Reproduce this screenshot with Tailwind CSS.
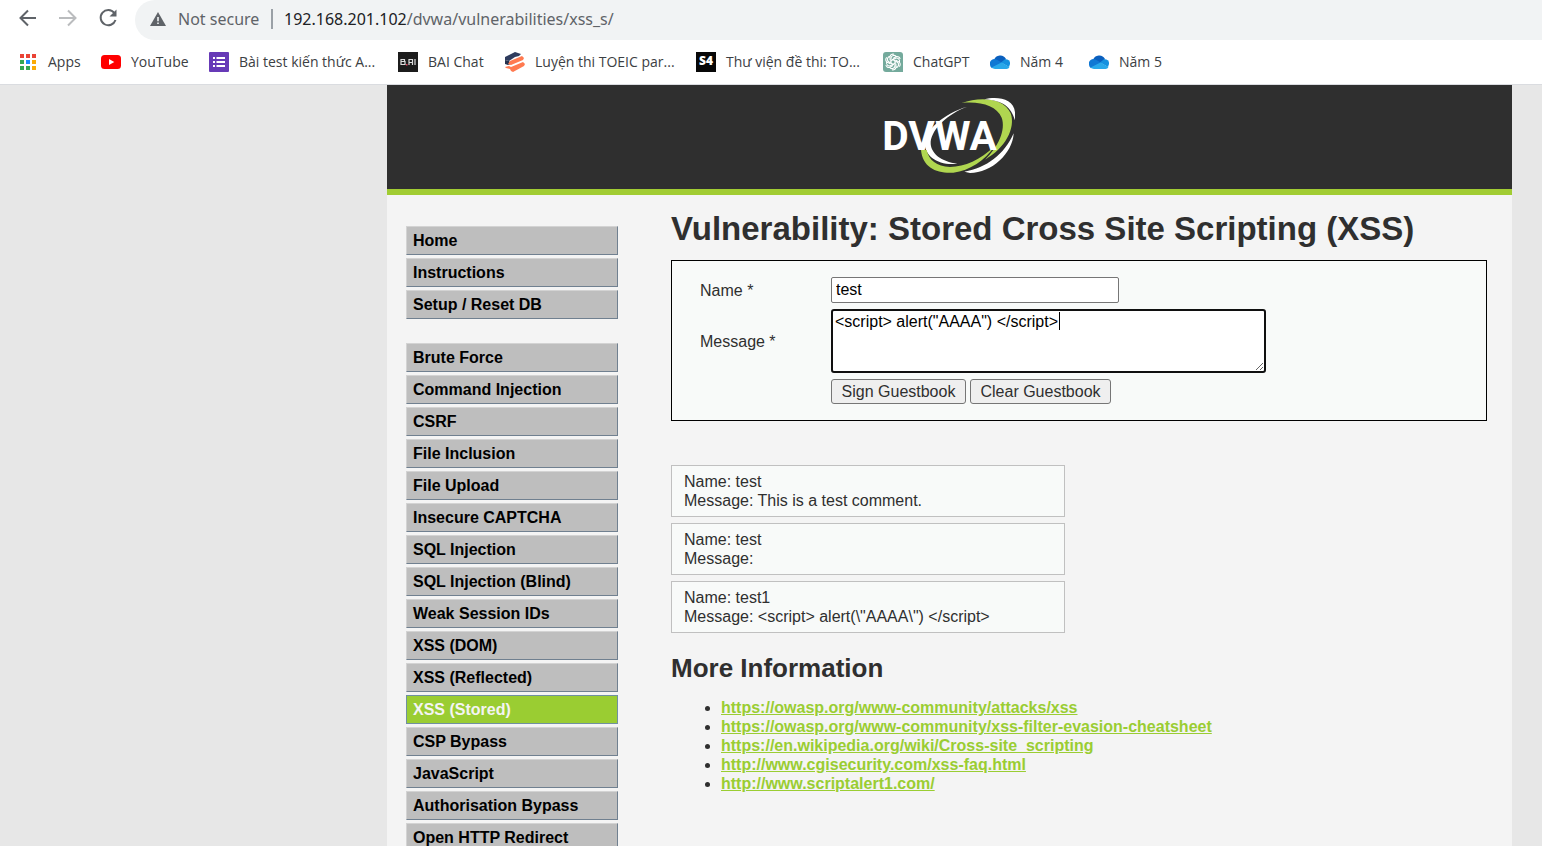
<!DOCTYPE html>
<html lang="en">
<head>
<meta charset="utf-8">
<title>Vulnerability: Stored Cross Site Scripting (XSS)</title>
<script src="https://cdn.jsdelivr.net/npm/@tailwindcss/browser@4"></script>
</head>
<body class="flex h-screen flex-col overflow-hidden bg-[#e7e7e7] font-['Liberation_Sans',Arial,sans-serif] text-base text-[#2f2f2f]">

<!-- Browser toolbar -->
<div class="shrink-0 border-b border-[#dadce0] bg-white font-['Open_Sans','Noto_Sans',sans-serif] text-[#3c4043]">
  <div class="flex h-10 items-start overflow-hidden">
    <div class="flex h-9 w-[135px] shrink-0 items-center gap-4 pl-4">
      <button type="button" aria-label="Back" class="size-6"><svg viewBox="0 0 24 24" class="size-6" fill="none" stroke="#5f6368" stroke-width="2"><path d="M20 12H5M12 4.500L4.500 12l7.500 7.500"/></svg></button>
      <button type="button" aria-label="Forward" class="size-6"><svg viewBox="0 0 24 24" class="size-6" fill="none" stroke="#babcbe" stroke-width="2"><path d="M3 12h15.500M12 4.500l7.500 7.500-7.500 7.500"/></svg></button>
      <button type="button" aria-label="Reload" class="size-6"><svg viewBox="0 0 24 24" class="size-6"><path d="M18.300 7A7.600 7.600 0 1 0 19.500 14" fill="none" stroke="#5f6368" stroke-width="2"/><path d="M20.500 3.500v7h-7z" fill="#5f6368"/></svg></button>
    </div>
    <div class="flex h-10 flex-1 items-center rounded-l-full bg-[#f1f3f4] pb-[2px] pl-[15px] font-['Noto_Sans',sans-serif] text-base">
      <svg viewBox="0 0 16 14" class="mr-3 h-[14px] w-4 shrink-0"><path d="M8 0l8 14H0z" fill="#5f6368"/><path d="M7.200 5h1.600v4.200H7.200zM7.200 10.400h1.600V12H7.200z" fill="#f1f3f4"/></svg>
      <span class="w-[93px] text-[#5f6368]">Not secure</span>
      <span class="mr-[11px] h-5 w-[2px] bg-[#9aa0a6]"></span>
      <span class="text-[#5f6368]"><span class="text-[#202124]">192.168.201.102</span>/dvwa/vulnerabilities/xss_s/</span>
    </div>
  </div>
  <nav aria-label="Bookmarks" class="flex h-11 items-center pl-[18px] text-sm whitespace-nowrap">
    <a href="#" class="flex w-[83px] shrink-0 items-center gap-[10px]"><svg viewBox="0 0 20 20" class="size-5"><path fill="#ea4335" d="M2 2h4v4H2zM8 2h4v4H8zM14 2h4v4h-4z"/><path fill="#34a853" d="M2 8h4v4H2zM2 14h4v4H2zM8 14h4v4H8z"/><path fill="#1a8cff" d="M8 8h4v4H8z"/><path fill="#fbab05" d="M14 8h4v4h-4zM14 14h4v4h-4z"/></svg>Apps</a>
    <a href="#" class="flex w-[108px] shrink-0 items-center gap-[10px]"><svg viewBox="0 0 20 20" class="size-5"><rect y="3" width="20" height="14" rx="3.500" fill="#f00"/><path d="M8 7l5.300 3L8 13z" fill="#fff"/></svg>YouTube</a>
    <a href="#" class="flex w-[189px] shrink-0 items-center gap-[10px]"><svg viewBox="0 0 20 20" class="size-5"><rect width="20" height="20" rx="1" fill="#673ab7"/><path fill="#fff" d="M4 5h2v2H4zM7.500 5H16v2H7.500zM4 9h2v2H4zM7.500 9H16v2H7.500zM4 13h2v2H4zM7.500 13H16v2H7.500z"/></svg>Bài test kiến thức A...</a>
    <a href="#" class="flex w-[107px] shrink-0 items-center gap-[10px]"><svg viewBox="0 0 20 20" class="size-5"><rect width="20" height="20" fill="#1c1c1c"/><path fill="none" stroke="#ddd" stroke-width="1.200" d="M3 7.500h3.500v2H3zM3 9.500h4v3H3zM3 7v6M11 13V7.500h3.500V13M11 10.500h3.500M17 7v6"/><path d="M8 12h1.500v1.500H8z" fill="#e0405a"/></svg>BAI Chat</a>
    <a href="#" class="flex w-[191px] shrink-0 items-center gap-[10px]"><svg viewBox="0 0 20 20" class="size-5"><path fill="#2f3c5e" d="M0 5L10 0l6 2-2 2-4 1-6 4-4-1z"/><path fill="#26324e" d="M0 8l4 1 2 3-3 1-3-1z"/><path fill="#ff7a50" d="M5 9l12-5 2 2-1 2-12 5-3-1zM0 15l4-1 2 1 12-5 2 2-1 2-11 6-2-1-1-2-4-1z"/></svg>Luyện thi TOEIC par...</a>
    <a href="#" class="flex w-[187px] shrink-0 items-center gap-[10px]"><svg viewBox="0 0 20 20" class="size-5"><rect width="20" height="20" fill="#080808"/><text x="3" y="13" font-family="Open Sans" font-weight="800" font-size="12" fill="#fff">S4</text></svg>Thư viện đề thi: TO...</a>
    <a href="#" class="flex w-[107px] shrink-0 items-center gap-[10px]"><svg viewBox="0 0 20 20" class="size-5"><path d="M3 0h14a3 3 0 0 1 3 3v17H3a3 3 0 0 1-3-3V3a3 3 0 0 1 3-3z" fill="#74aa9c"/><g fill="none" stroke="#fff" stroke-width="1.100"><path id="petal" d="M8 12.200V6.500a3 3 0 0 1 5.500-1.700M10 6.600l3.500-2a3 3 0 0 1 3.600 2.400"/><use href="#petal" transform="rotate(60 10 10)"/><use href="#petal" transform="rotate(120 10 10)"/><use href="#petal" transform="rotate(180 10 10)"/><use href="#petal" transform="rotate(240 10 10)"/><use href="#petal" transform="rotate(300 10 10)"/></g></svg>ChatGPT</a>
    <a href="#" class="flex w-[99px] shrink-0 items-center gap-[10px]"><svg viewBox="0 0 20 20" class="size-5"><path fill="#0a5fbe" d="M4 8a6.500 6.500 0 0 1 12-1l-4 5-8-3z"/><path fill="#0f78d4" d="M0 12.500A4.500 4.500 0 0 1 6.500 7.500l6 3.500L2 16.200A4 4 0 0 1 0 12.500z"/><path fill="#1490df" d="M11 10.500l4-3.300A4.300 4.300 0 0 1 20 12l-1 3z"/><path fill="#28a8ea" d="M1.500 15.500L11.500 10.500l8 4.500a4 4 0 0 1-3 2H5a5 5 0 0 1-3.500-1.500z"/></svg>Năm 4</a>
    <a href="#" class="flex w-[99px] shrink-0 items-center gap-[10px]"><svg viewBox="0 0 20 20" class="size-5"><path fill="#0a5fbe" d="M4 8a6.500 6.500 0 0 1 12-1l-4 5-8-3z"/><path fill="#0f78d4" d="M0 12.500A4.500 4.500 0 0 1 6.500 7.500l6 3.500L2 16.200A4 4 0 0 1 0 12.500z"/><path fill="#1490df" d="M11 10.500l4-3.300A4.300 4.300 0 0 1 20 12l-1 3z"/><path fill="#28a8ea" d="M1.500 15.500L11.500 10.500l8 4.500a4 4 0 0 1-3 2H5a5 5 0 0 1-3.500-1.500z"/></svg>Năm 5</a>
  </nav>
</div>

<!-- Page -->
<div class="mr-[30px] ml-[387px] flex min-h-0 flex-1 flex-col bg-[#f4f4f4]">
  <header class="flex shrink-0 justify-center border-b-6 border-[#a1cc33] bg-[#2f2f2f]">
    <svg viewBox="0 0 480 312" class="h-[104px] w-[160px]" role="img" aria-label="DVWA">
      <path fill="#fff" d="M292 65C235 85 187 130 182 170C180 205 215 230 262 236C205 242 163 215 164 170C166 138 220 85 292 65z"/>
      <path fill="#b0d650" d="M275 54C330 34 402 38 422 85C438 130 405 190 345 224C385 185 408 135 395 98C380 62 330 48 275 54z"/>
      <path fill="#fff" d="M343 43C380 33 432 40 435 82V106C424 68 400 46 343 43zM431 145C428 205 365 264 300 264L283 260C350 248 402 210 431 145z"/>
      <path fill="#b0d650" d="M153 195C158 248 200 266 250 263C300 258 345 225 374 184C330 225 285 246 240 246C200 245 176 225 170 195z"/>
      <text x="37" y="194" font-family="Roboto, sans-serif" font-weight="700" font-size="122" fill="#fff">DVWA</text>
    </svg>
  </header>

  <div class="flex min-h-0 flex-1">
    <nav aria-label="Main menu" class="ml-[19px] flex w-[212px] shrink-0 flex-col gap-6 pt-[31px] font-bold text-black">
      <ul class="flex flex-col gap-[3px]">
        <li><a href="#" class="block h-[29px] border border-t-[#d3d3d3] border-r-[#708090] border-b-[#708090] border-l-[#d3d3d3] bg-[#bebebe] px-[6px] leading-[27px]">Home</a></li>
        <li><a href="#" class="block h-[29px] border border-t-[#d3d3d3] border-r-[#708090] border-b-[#708090] border-l-[#d3d3d3] bg-[#bebebe] px-[6px] leading-[27px]">Instructions</a></li>
        <li><a href="#" class="block h-[29px] border border-t-[#d3d3d3] border-r-[#708090] border-b-[#708090] border-l-[#d3d3d3] bg-[#bebebe] px-[6px] leading-[27px]">Setup / Reset DB</a></li>
      </ul>
      <ul class="flex flex-col gap-[3px]">
        <li><a href="#" class="block h-[29px] border border-t-[#d3d3d3] border-r-[#708090] border-b-[#708090] border-l-[#d3d3d3] bg-[#bebebe] px-[6px] leading-[27px]">Brute Force</a></li>
        <li><a href="#" class="block h-[29px] border border-t-[#d3d3d3] border-r-[#708090] border-b-[#708090] border-l-[#d3d3d3] bg-[#bebebe] px-[6px] leading-[27px]">Command Injection</a></li>
        <li><a href="#" class="block h-[29px] border border-t-[#d3d3d3] border-r-[#708090] border-b-[#708090] border-l-[#d3d3d3] bg-[#bebebe] px-[6px] leading-[27px]">CSRF</a></li>
        <li><a href="#" class="block h-[29px] border border-t-[#d3d3d3] border-r-[#708090] border-b-[#708090] border-l-[#d3d3d3] bg-[#bebebe] px-[6px] leading-[27px]">File Inclusion</a></li>
        <li><a href="#" class="block h-[29px] border border-t-[#d3d3d3] border-r-[#708090] border-b-[#708090] border-l-[#d3d3d3] bg-[#bebebe] px-[6px] leading-[27px]">File Upload</a></li>
        <li><a href="#" class="block h-[29px] border border-t-[#d3d3d3] border-r-[#708090] border-b-[#708090] border-l-[#d3d3d3] bg-[#bebebe] px-[6px] leading-[27px]">Insecure CAPTCHA</a></li>
        <li><a href="#" class="block h-[29px] border border-t-[#d3d3d3] border-r-[#708090] border-b-[#708090] border-l-[#d3d3d3] bg-[#bebebe] px-[6px] leading-[27px]">SQL Injection</a></li>
        <li><a href="#" class="block h-[29px] border border-t-[#d3d3d3] border-r-[#708090] border-b-[#708090] border-l-[#d3d3d3] bg-[#bebebe] px-[6px] leading-[27px]">SQL Injection (Blind)</a></li>
        <li><a href="#" class="block h-[29px] border border-t-[#d3d3d3] border-r-[#708090] border-b-[#708090] border-l-[#d3d3d3] bg-[#bebebe] px-[6px] leading-[27px]">Weak Session IDs</a></li>
        <li><a href="#" class="block h-[29px] border border-t-[#d3d3d3] border-r-[#708090] border-b-[#708090] border-l-[#d3d3d3] bg-[#bebebe] px-[6px] leading-[27px]">XSS (DOM)</a></li>
        <li><a href="#" class="block h-[29px] border border-t-[#d3d3d3] border-r-[#708090] border-b-[#708090] border-l-[#d3d3d3] bg-[#bebebe] px-[6px] leading-[27px]">XSS (Reflected)</a></li>
        <li><a href="#" aria-current="page" class="block h-[29px] border border-[#7090a0] bg-[#9acd32] px-[6px] leading-[27px] text-[#f4f4f4]">XSS (Stored)</a></li>
        <li><a href="#" class="block h-[29px] border border-t-[#d3d3d3] border-r-[#708090] border-b-[#708090] border-l-[#d3d3d3] bg-[#bebebe] px-[6px] leading-[27px]">CSP Bypass</a></li>
        <li><a href="#" class="block h-[29px] border border-t-[#d3d3d3] border-r-[#708090] border-b-[#708090] border-l-[#d3d3d3] bg-[#bebebe] px-[6px] leading-[27px]">JavaScript</a></li>
        <li><a href="#" class="block h-[29px] border border-t-[#d3d3d3] border-r-[#708090] border-b-[#708090] border-l-[#d3d3d3] bg-[#bebebe] px-[6px] leading-[27px]">Authorisation Bypass</a></li>
        <li><a href="#" class="block h-[29px] border border-t-[#d3d3d3] border-r-[#708090] border-b-[#708090] border-l-[#d3d3d3] bg-[#bebebe] px-[6px] leading-[27px]">Open HTTP Redirect</a></li>
      </ul>
    </nav>

    <main class="mr-[25px] ml-[53px] min-w-0 flex-1 pt-[14px] leading-[19px]">
      <h1 class="text-[33px] leading-10 font-bold">Vulnerability: Stored Cross Site Scripting (XSS)</h1>
      <form class="mt-[11px] grid grid-cols-[131px_1fr] items-center gap-y-[6px] border border-black bg-[#f8faf9] py-4 pl-7">
        <label for="name">Name *</label>
        <input id="name" type="text" value="test" class="h-[26px] w-[288px] rounded-[2px] border border-[#767676] bg-white px-1 text-black">
        <label for="message">Message *</label>
        <div class="relative h-16 w-[435px]">
          <textarea id="message" class="block h-16 w-[435px] resize rounded-[3px] border-2 border-[#101010] bg-white px-[2px] py-px leading-[19px] text-black outline-none">&lt;script&gt; alert("AAAA") &lt;/script&gt;</textarea>
          <span class="absolute top-[3px] left-[228px] h-[18px] w-px bg-black"></span>
        </div>
        <div class="col-start-2 flex gap-1">
          <button type="submit" class="h-[25px] w-[135px] rounded-[3px] border border-[#767676] bg-[#efefef] leading-[23px]">Sign Guestbook</button>
          <button type="reset" class="h-[25px] w-[141px] rounded-[3px] border border-[#767676] bg-[#efefef] leading-[23px]">Clear Guestbook</button>
        </div>
      </form>

      <div class="mt-11 flex w-[394px] flex-col gap-[6px]">
        <div class="border border-[#c0c0c0] bg-[#f8faf9] px-3 py-[6px]">Name: test<br>Message: This is a test comment.</div>
        <div class="border border-[#c0c0c0] bg-[#f8faf9] px-3 py-[6px]">Name: test<br>Message:</div>
        <div class="border border-[#c0c0c0] bg-[#f8faf9] px-3 py-[6px]">Name: test1<br>Message: &lt;script&gt; alert(\"AAAA\") &lt;/script&gt;</div>
      </div>

      <h2 class="mt-[19px] text-[26px] leading-8 font-bold">More Information</h2>
      <ul class="mt-[14px] list-disc pl-[50px] font-bold">
        <li><a href="https://owasp.org/www-community/attacks/xss" class="text-[#9acd32] underline">https://owasp.org/www-community/attacks/xss</a></li>
        <li><a href="https://owasp.org/www-community/xss-filter-evasion-cheatsheet" class="text-[#9acd32] underline">https://owasp.org/www-community/xss-filter-evasion-cheatsheet</a></li>
        <li><a href="https://en.wikipedia.org/wiki/Cross-site_scripting" class="text-[#9acd32] underline">https://en.wikipedia.org/wiki/Cross-site_scripting</a></li>
        <li><a href="http://www.cgisecurity.com/xss-faq.html" class="text-[#9acd32] underline">http://www.cgisecurity.com/xss-faq.html</a></li>
        <li><a href="http://www.scriptalert1.com/" class="text-[#9acd32] underline">http://www.scriptalert1.com/</a></li>
      </ul>
    </main>
  </div>
</div>
</body>
</html>
